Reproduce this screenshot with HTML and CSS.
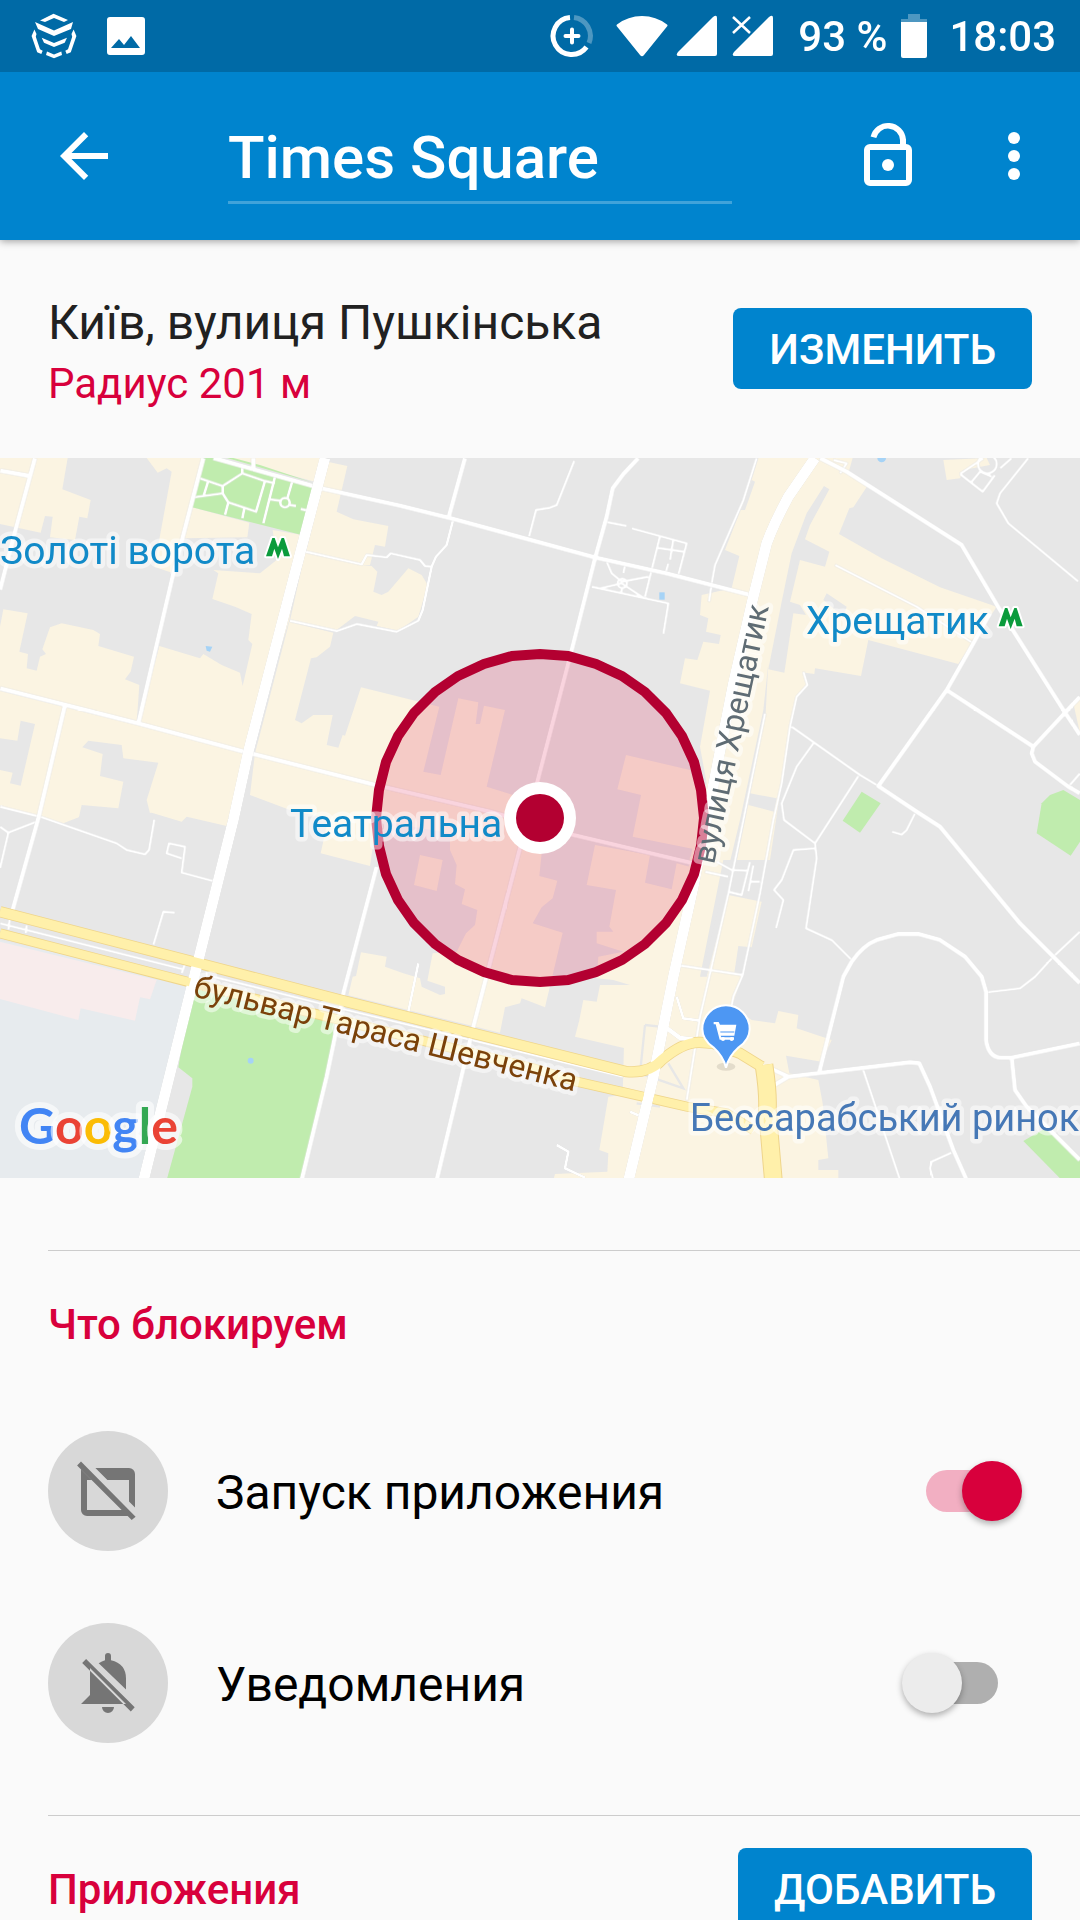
FILE: index.html
```html
<!DOCTYPE html>
<html lang="ru">
<head>
  <meta charset="UTF-8" />
  <meta name="viewport" content="width=device-width, initial-scale=1.0"/>
  <title>Times Square</title>
  <link rel="stylesheet" href="styles.css">
</head>
<body>
<div class="screen">

  <div class="status-bar">
    <svg class="status-app" viewBox="30 12 48 48" aria-hidden="true">
      <path d="M40 20.5 53.5 13.7 68 20 64 22 54 18 45 22z M35 22 54 30.5 73 22 71 29 54 36 38 29z M41.7 37.7 54 43 67 37.7 64.7 42.7 54 47 44 42.7z M47 51.5 54 54.5 61.3 51.5 62 55 54 58.3 46 55z M34.4 29.5 31.6 36 37.2 52.3 41.3 54 42.7 50.7 40 49.3 35.8 36.7 36.5 34z M73.6 29.5 76.4 36 70.8 52.3 66.7 54 65.3 50.7 68 49.3 72.2 36.7 71.5 34z"/>
    </svg>
    <svg class="status-image" viewBox="0 0 40 40" aria-hidden="true">
      <path fill-rule="evenodd" d="M4 1h32a3 3 0 0 1 3 3v32a3 3 0 0 1-3 3H4a3 3 0 0 1-3-3V4a3 3 0 0 1 3-3z M5 32h29L25 20l-7 9-5-6z"/>
    </svg>
    <div class="status-right">
      <svg class="status-data" viewBox="0 0 44 44" aria-hidden="true">
        <path fill="none" stroke="#fff" stroke-width="5" d="M20 3.600A18.500 18.500 0 1 0 36.500 33"/>
        <path fill="none" stroke="#fff" stroke-width="5" opacity=".3" d="M24 3.600A18.500 18.500 0 0 1 39 29"/>
        <path fill="none" stroke="#fff" stroke-width="4" stroke-linecap="round" d="M22 15.500v13M15.500 22h13"/>
      </svg>
      <svg class="status-wifi" viewBox="0 0 52 42" aria-hidden="true">
        <path d="M1 9.500Q12 1 26 1t25 8.500q1 1 0 2L28 40q-2 2.500-4 0L1 11.500q-1-1 0-2z"/>
      </svg>
      <svg class="status-signal" viewBox="0 0 42 42" aria-hidden="true">
        <path d="M37 2q4-3 4 1v36q0 2-2 2H3q-4 0-1-4z"/>
      </svg>
      <svg class="status-signal second" viewBox="0 0 42 42" aria-hidden="true">
        <path d="M37 2q4-3 4 1v36q0 2-2 2H3q-4 0-1-4z"/>
        <path stroke="#006aa6" stroke-width="6" d="M2 2l16 16M18 2 2 18"/>
        <path stroke="#fff" stroke-width="2.500" d="M1 2l17 16M18 2 1 18"/>
      </svg>
      <span class="battery-text">93 %</span>
      <svg class="status-battery" viewBox="0 0 26 44" aria-hidden="true">
        <path opacity=".3" d="M7 0h12v5h7v3H0V5h7z"/>
        <path d="M0 8h26v34q0 2-2 2H2q-2 0-2-2z"/>
      </svg>
      <span class="clock">18:03</span>
    </div>
  </div>

  <header class="toolbar">
    <button class="icon-button" type="button" aria-label="Назад">
      <svg viewBox="0 0 24 24"><path d="M20 11H7.830l5.590-5.590L12 4l-8 8 8 8 1.410-1.410L7.830 13H20v-2z"/></svg>
    </button>
    <input class="title-input" type="text" value="Times Square" aria-label="Название">
    <button class="icon-button" type="button" aria-label="Блокировка">
      <svg viewBox="0 0 24 24"><path fill-rule="evenodd" d="M18 8V6.500A6 6 0 0 0 6.200 5.500L8.100 6A4 4 0 0 1 16 6.700V8H6a2 2 0 0 0-2 2v10a2 2 0 0 0 2 2h12a2 2 0 0 0 2-2V10a2 2 0 0 0-2-2zM18 20H6V10h12z"/><circle cx="12" cy="15" r="2"/></svg>
    </button>
    <button class="icon-button more" type="button" aria-label="Ещё">
      <svg viewBox="0 0 24 24"><circle cx="12" cy="6" r="2"/><circle cx="12" cy="12" r="2"/><circle cx="12" cy="18" r="2"/></svg>
    </button>
  </header>

  <main class="content">
    <section class="place">
      <div class="place-info">
        <div class="address">Київ, вулиця Пушкінська</div>
        <div class="radius">Радиус 201 м</div>
      </div>
      <button class="button" type="button">ИЗМЕНИТЬ</button>
    </section>

    <svg class="map" viewBox="0 0 1080 720" role="img" aria-label="Карта">
      <rect width="1080" height="720" fill="#e7e7e7"/>

      <!-- map geometry is drawn at three units per pixel, in tiles -->
      <g transform="scale(.333333)">

        <!-- blocks -->
        <g transform="translate(0 -24)">
          <g class="built">
            <polygon points="0,24 203,24 187,118 272,150 262,205 238,200 225,270 150,262 158,200 135,198 122,248 0,222"/>
            <polygon points="440,24 610,24 520,370 463,350 515,65 500,55 473,68"/>
            <polygon points="680,24 965,24 945,95"/>
            <polygon points="577,172 748,218 742,262 550,265"/>
            <polygon points="640,360 780,370 830,330 818,240 905,255 868,510 745,905 415,820 478,588 600,625 610,612 665,645 720,668 728,708 757,582 745,570 755,492 705,470 637,447 655,370"/>
            <polygon points="10,478 83,490 58,605 84,612 80,655 110,662 120,620 138,612 127,598 150,532 185,520 280,540 300,552 295,588 402,620 392,665 375,688 418,705 410,820 0,715 0,530"/>
            <polygon points="0,722 735,905 680,1128 560,1100 545,1115 455,1088 240,1100 190,1120 0,1072"/>
            <polygon points="975,34 1042,48 1010,185 1060,208 1165,228 1155,290 1125,285 1110,345 1085,345 918,305 965,115"/>
            <polygon points="915,308 1085,345 1115,348 1132,365 1120,425 1145,435 1165,425 1225,355 1265,375 1283,405 1255,500 1195,542 1130,528 1135,515 1065,498 1010,540 870,512"/>
            <polygon points="868,515 1000,548 990,590 950,622 933,625 885,810 905,820 940,795 998,795 980,885 1015,893 1028,855 1035,857 1083,712 1318,770 1270,965 1322,975 1375,745 1435,757 1427,822 1440,822 1452,767 1515,780 1460,1010 1570,1045 1540,1160 1350,1150 1130,1110 1110,1248 962,1210 985,1105 870,1080 750,1035 765,910"/>
          </g>
          <g class="ground">
            <polygon points="62,812 105,822 62,1007 30,1000 38,968 0,960 0,865 52,872"/>
            <polygon points="265,872 365,885 370,925 475,938 440,1050 455,1110 235,1110 245,1065 355,1075 370,995 300,978 308,912 247,892"/>
          </g>
          <polygon class="park" points="612,24 660,24 940,105 905,255 577,172"/>
          <polygon class="park" points="680,24 765,48 940,98 780,45 700,24"/>
          <polygon class="water" points="617,588 637,590 630,605 620,602"/>
        </g>

        <g transform="translate(1020 -24)">
          <g class="built">
            <polygon points="858,915 1050,960 1100,1110 1075,1200 878,1160 903,1035 832,1018"/>
          </g>
          <rect class="water" x="958" y="427" width="16" height="22"/>
        </g>

        <g transform="translate(2100 -24)">
          <g class="built">
            <polygon points="175,24 458,24 445,70 502,108 460,172 448,175 417,252 545,325 720,412 890,470 775,642 505,570 483,678 345,655 343,672 315,668 320,705 290,740 270,830 210,1230 -30,1230 20,1000 0,890 30,722 -60,700 -45,625 -8,630 10,575 57,582 62,555 18,545 25,505 0,495 5,435 95,415 118,318 75,300 145,120"/>
            <polygon points="730,30 860,24 870,45 790,60 780,85 740,90"/>
            <polygon points="1120,760 1140,740 1140,850"/>
          </g>
          <g class="ground">
            <polygon points="372,108 388,118 330,225 315,268 388,305 375,350 300,330 270,455 300,465 318,495 280,490 253,668 205,658 245,455 275,310 320,190"/>
            <polygon points="205,640 190,780 120,1110 60,1360 0,1600 20,1600 90,1330 135,1110 197,790"/>
            <polygon points="150,1030 230,1045 222,1085 145,1065"/>
            <polygon points="155,90 165,95 135,180 122,180"/>
            <polygon points="380,430 440,470 430,500 370,450"/>
          </g>
          <ellipse class="water" cx="545" cy="24" rx="13" ry="13"/>
        </g>

        <g transform="translate(0 1056)">
          <polygon class="campus" points="0,390 570,520 430,1110 0,1110"/>
          <polygon class="clinic" points="0,395 470,510 450,568 420,562 405,632 242,595 235,630 0,567"/>
          <polygon class="park" points="575,530 1005,630 990,760 900,1110 500,1110 577,830 577,805 535,772"/>
          <circle class="water" cx="752" cy="752" r="9"/>
        </g>

        <g transform="translate(1020 1056)">
          <g class="built">
            <polygon points="330,30 560,80 605,130 598,198 652,212 638,265 605,292 578,340 668,368 615,592 545,565 540,580 495,592 480,668 25,556 38,500 48,498 63,427 140,440 135,470 190,490 240,505 245,530 300,555 315,552 315,530 262,512 278,430 350,425 378,370 405,345 412,300 365,282 375,238 345,222 350,165 330,120"/>
            <polygon points="240,135 308,150 290,243 222,225"/>
            <polygon points="765,105 930,135 915,218 995,238 1010,160 1085,180 1060,400 1000,700 855,715 705,680 718,630 730,570 770,575 780,525 870,525 820,510 770,505 775,440 850,425 770,400 770,365 820,365 808,350 828,240 740,225"/>
          </g>
        </g>

        <g transform="translate(2100 1056)">
          <g class="built">
            <polygon points="-30,140 70,150 0,500 20,500 85,255 185,275 155,412 115,408 103,488 128,495 95,590 155,630 225,640 235,603 295,615 290,655 395,690 365,755 258,737 268,790 355,810 368,880 385,1045 355,1050 355,1080 415,1080 415,1110 -440,1110 -435,1092 -278,1085 -275,1030 -302,1020 -275,860 -232,855 -228,705 -100,690"/>
          </g>
          <polygon class="park" points="485,-55 542,-20 480,68 428,32"/>
          <polygon class="park" points="1090,-60 1140,-30 1140,95 1112,137 1010,70 1025,-20 1050,-45"/>
          <polygon class="park" points="1010,970 1045,950 1140,1050 1140,1110 1085,1110 970,993"/>
          <path fill="none" stroke="#e7e7e7" stroke-width="7" d="M-165,645 -180,790 -50,835 -95,760 M-165,645 -120,650 M-190,880 -120,890"/>
        </g>

        <!-- small paths -->
        <g class="road path">
          <g transform="translate(0 -24)">
            <path d="M918,305 1085,343 1100,315 1160,322 1172,310 1260,330 1275,348 1295,350 M870,512 1010,543 1070,522 1190,545 1255,512 1268,480 1295,350 1308,320 1340,285 1360,207"/>
            <path d="M600,85 668,108 727,70 795,93 768,185 685,157 668,130 580,142 M668,108V130 M625,92 610,140 M685,157 675,195 M733,175 727,205 M727,50V70 M795,93 825,100 M825,80 790,220 M878,90 862,145 M810,148 840,152 M870,165 888,168 M902,177 925,182"/>
            <circle cx="855" cy="158" r="14"/>
          </g>
          <g transform="translate(1020 -24)">
            <path d="M703,32 650,165 630,173 588,180 567,260 M795,215 860,228 M875,235 1040,280 1015,375 M960,258 915,440 M950,293 1032,305 M1000,268 990,330 M985,340 975,375 M755,410 985,460 970,552 M800,335 815,370 845,395 925,380 M845,400 910,443 M845,400 780,415 M855,345 850,370 M847,415 842,430"/>
            <circle cx="847" cy="400" r="14"/>
          </g>
          <g transform="translate(2100 -24)">
            <path d="M170,24 130,150 45,345 35,400 27,455 M405,345 650,470 820,580 M275,830 480,975 535,1008 M340,880 290,950 245,1060 252,1110 345,1180 M475,978 345,1180 350,1225 318,1435 395,1470 455,1530 M345,1195 280,1200 245,1290 222,1320 250,1350 228,1435"/>
            <path d="M310,665 322,705 290,740 270,830 245,1000 220,1110 180,1330 128,1575 100,1640 88,1700 M195,790 130,1110 85,1330 0,1700 -40,1950 M-70,1545 128,1575"/>
            <path d="M985,24 900,130 890,160 925,220 1135,395 M780,72 850,25 M780,72 848,125 885,75 M935,24 900,55 M815,95 840,65 875,80 M400,30 440,40 420,70"/>
            <circle cx="862" cy="42" r="28"/>
            <path d="M1105,1010 1140,970"/>
          </g>
          <g transform="translate(0 1056)">
            <path d="M0,-10 120,20 350,100 380,120 435,133 447,120 463,28 M110,35 25,68 0,50 M25,68 0,175 M545,145 500,130 507,100 555,110 545,188 640,213 M525,308 490,305 460,405"/>
            <path d="M0,340 550,478 M30,320 25,360 M80,345 77,370 M555,462 545,490 M620,485 620,500 M640,500 1020,595 1870,800"/>
          </g>
          <g transform="translate(1020 1056)">
            <path d="M235,460 205,605 M650,1005 685,1025 675,1075 735,1103 M1010,560 1030,625 1080,632 M870,905 900,918"/>
          </g>
          <g transform="translate(2100 1056)">
            <path d="M50,155 95,180 145,182 M150,155 125,255 85,245 M160,165 145,245 M150,215H180 M15,185 85,200 M860,547 960,535 1005,500 1060,440 1140,365 M488,775 600,1110 M755,1028 695,1055 690,1075 700,1110 M645,10 620,60 605,74 575,65"/>
          </g>
        </g>

        <!-- streets -->
        <g class="road street">
          <g transform="translate(0 -24)">
            <path d="M105,24 45,245 0,420 M0,62 90,78 M610,24 520,370 415,820 M195,765 115,1105 35,1390 M0,715 415,820 740,907 1120,1003 1470,1085 1720,1155 2100,1245 M640,24 965,115 1200,167 1360,207 1785,322 2000,370 2250,435 M1395,24 1345,205 M760,24V60 M1130,1250 1030,1630 1005,1760 980,1880 905,2190"/>
          </g>
          <g transform="translate(1020 -24)">
            <path d="M895,24 850,72 818,115 800,200 765,325 690,620 400,1730 290,2190"/>
          </g>
          <g transform="translate(2100 -24)">
            <path d="M360,24 440,65 785,285 900,480 1090,780 1140,855 M1140,740 1000,890 995,910 1005,935 1105,1010 1140,1030 M1000,890 740,720 M820,580 740,720 535,1008 650,1085 720,1130 960,1420 1140,1600 M870,490 820,580"/>
          </g>
          <g transform="translate(2100 1056)">
            <path d="M358,785 430,500 455,455Q490,405 530,390L595,372H655L720,390 795,440 845,500 858,545V690Q865,740 900,743L935,743 1140,700 M935,743 945,840 980,890 1140,1050 M200,770 265,800 630,757 658,760 690,830 760,1020 800,1110 M215,830 265,800"/>
          </g>
        </g>

        <!-- boulevard -->
        <g transform="translate(0 1056)" fill="none">
          <g stroke="#efd58b">
            <path stroke-width="34" d="M0,305 590,458 1020,570 1880,785Q1950,790 1985,750Q2050,695 2100,697L2140,700 2220,730 2285,770"/>
            <path stroke-width="30" d="M0,370 560,515 1600,775 1730,815 2060,890 2180,910 2260,960"/>
            <path stroke-width="56" d="M2292,765Q2305,850 2302,900L2320,1110"/>
          </g>
        </g>
        <g class="road avenue">
          <path d="M975,0 745,881 700,1086 590,1526 430,2170"/>
          <path d="M2445,0 2365,116Q2320,200 2300,256L2260,416 2200,676 2080,1286 2020,1556 1960,1856 1885,2170"/>
          <path class="turn" d="M2000,1710 2040,1740 2080,1745"/>
        </g>
        <g transform="translate(0 1056)" fill="none" stroke="#fff0aa">
          <path stroke-width="29" d="M0,305 590,458 1020,570 1880,785Q1950,790 1985,750Q2050,695 2100,697L2140,700 2220,730 2285,770"/>
          <path stroke-width="25" d="M0,370 570,517 M640,535 1600,775 1730,815 1930,860 M1960,867 2060,890 2180,910 2260,960"/>
          <path stroke-width="50" d="M2292,765Q2305,850 2302,900L2320,1110"/>
        </g>

        <!-- market pin -->
        <ellipse cx="2178" cy="1826" rx="28" ry="12" fill="#e3dccb"/>
        <path fill="#4d97f3" stroke="#fff" stroke-width="6" d="M2178,1829Q2170,1795 2140,1768Q2107,1745 2107,1713A71,71 0 0 1 2249,1713Q2249,1745 2216,1768Q2186,1795 2178,1829z"/>
        <path fill="#fff" d="M2141,1692h15l4,8h49l-6,33h-41l2,5h38v7h-43l-12,-46h-6z"/>
        <circle cx="2169" cy="1743" r="6" fill="#fff"/><circle cx="2195" cy="1743" r="6" fill="#fff"/>
        <path stroke="#4d97f3" stroke-width="3" d="M2161,1722h42"/>

        <!-- metro signs -->
        <g class="metro">
          <path d="M798,295 817,240 824,240 834,268 845,240 852,240 870,295 852,295 846,272 834,303 823,272 816,295z"/>
          <path d="M2996,505 3015,450 3022,450 3032,478 3043,450 3050,450 3068,505 3050,505 3044,482 3032,513 3021,482 3014,505z"/>
        </g>
      </g>

      <!-- geofence -->
      <polygon class="fence" points="704,360 701,388 694,416 682,442 666,465 645,486 622,502 596,514 568,522 540,524 512,522 484,514 458,502 435,486 414,465 398,442 386,416 379,388 376,360 379,332 386,304 398,278 414,255 435,234 458,218 484,206 512,198 540,196 568,198 596,206 622,218 645,234 666,255 682,278 694,304 701,332"/>

      <g class="labels">
        <text class="station" x="0" y="106">Золоті ворота</text>
        <text class="station" x="806" y="176">Хрещатик</text>
        <text class="station" x="290" y="379">Театральна</text>
        <text class="market" x="690" y="673">Бессарабський ринок</text>
        <text class="street-name" transform="translate(714 407) rotate(-78)">вулиця Хрещатик</text>
        <text class="boulevard-name" transform="translate(192 538) rotate(14)">бульвар Тараса Шевченка</text>
      </g>

      <circle cx="540" cy="360" r="36" fill="#fff"/>
      <circle cx="540" cy="360" r="24" fill="#b30031"/>

      <text class="logo" x="19" y="686"><tspan fill="#4285f4">G</tspan><tspan fill="#ea4335">o</tspan><tspan fill="#fbbc05">o</tspan><tspan fill="#4285f4">g</tspan><tspan fill="#34a853">l</tspan><tspan fill="#ea4335">e</tspan></text>
    </svg>

    <section class="group first">
      <h2 class="group-title">Что блокируем</h2>
      <label class="row">
        <span class="row-icon">
          <svg viewBox="0 0 24 24"><path d="M7.800 4.300H19a2 2 0 0 1 2 2V17.500L19 15.500V8.300H11.800z M3 4.800 6.500 8.300H5V18.300H17.500L19.500 20.300H5a2 2 0 0 1-2-2z M3 2.200 21.200 20.600 19.900 21.700 1.700 3.500z"/></svg>
        </span>
        <span class="row-text">Запуск приложения</span>
        <input class="switch" type="checkbox" checked>
      </label>
      <label class="row">
        <span class="row-icon">
          <svg viewBox="0 0 24 24"><path d="M8.900 5.400Q10 4.700 11 4.400V3a1 1 0 0 1 2 0V4.400Q18 5.600 18 10.500V14.200z M6 7V16L3 19H18L6 7z M4.700 4 20.900 20.100 19.600 21.500 3.400 5.300z M10 20h4a2 2 0 0 1-4 0z"/></svg>
        </span>
        <span class="row-text">Уведомления</span>
        <input class="switch" type="checkbox">
      </label>
    </section>

    <section class="group">
      <div class="group-head">
        <h2 class="group-title">Приложения</h2>
        <button class="button" type="button">ДОБАВИТЬ</button>
      </div>
    </section>
  </main>

</div>
</body>
</html>
```
FILE: styles.css
```css
* { box-sizing: border-box; }

body {
  margin: 0;
  font-family: Roboto, "Noto Sans", sans-serif;
  background-color: #fafafa;
  color: #000;
}
svg { display: block; flex: none; }

.screen {
  height: 100vh;
  display: flex;
  flex-direction: column;
  overflow: hidden;
}

/* status bar */
.status-bar {
  flex: none;
  height: 72px;
  padding: 0 24px 0 30px;
  display: flex;
  align-items: center;
  background: #006aa6;
  color: #fff;
  font-size: 42px;
  font-weight: 500;
  z-index: 2;
}
.status-bar svg { fill: #fff; }
.status-app { width: 48px; height: 48px; }
.status-image { width: 40px; height: 40px; margin-left: 28px; }
.status-right {
  margin-left: auto;
  display: flex;
  align-items: center;
}
.status-data { width: 44px; height: 44px; margin-right: 22px; }
.status-wifi { width: 52px; height: 42px; margin-right: 8px; }
.status-signal { width: 42px; height: 42px; }
.status-signal.second { margin-left: 14px; }
.battery-text { margin-left: 24px; }
.status-battery { width: 26px; height: 44px; margin: 0 22px 0 14px; }

/* toolbar */
.toolbar {
  flex: none;
  height: 168px;
  padding: 0 30px 0 48px;
  display: flex;
  align-items: center;
  background: #0084ce;
  box-shadow: 0 1px 8px rgba(0, 0, 0, 0.4);
  z-index: 1;
}
.icon-button {
  flex: none;
  width: 72px;
  height: 72px;
  padding: 0;
  border: none;
  background: none;
  cursor: pointer;
}
.icon-button svg { width: 72px; height: 72px; fill: #fff; }
.icon-button.more { margin-left: 54px; }
.title-input {
  flex: 1;
  min-width: 0;
  height: 84px;
  margin: 12px 120px 0 108px;
  padding: 0 0 6px;
  border: none;
  border-bottom: 3px solid #40a3da;
  border-radius: 0;
  outline: none;
  background: none;
  color: #fff;
  font-family: inherit;
  font-size: 60px;
  font-weight: 500;
}

/* content */
.content {
  flex: 1;
  min-height: 0;
  overflow-y: auto;
  scrollbar-width: none;
}
.place {
  height: 218px;
  padding: 0 48px 2px;
  display: flex;
  align-items: center;
  justify-content: space-between;
}
.place-info { padding-top: 8px; }
.address {
  font-size: 48px;
  line-height: 56px;
  color: #212121;
}
.radius {
  margin-top: 8px;
  font-size: 42px;
  line-height: 50px;
  color: #d8003c;
}
.button {
  height: 81px;
  padding: 3px 36px 0;
  border: none;
  border-radius: 8px;
  background: #0084ce;
  color: #fff;
  font-family: inherit;
  font-size: 42px;
  font-weight: 500;
  cursor: pointer;
}

/* map */
.map { width: 100%; height: auto; }
.built { fill: #fbf4e2; }
.ground { fill: #e7e7e7; }
.park { fill: #c0ecae; }
.campus { fill: #e7ebee; }
.clinic { fill: #f8ecec; }
.water { fill: #a6d3f6; }
.road {
  fill: none;
  stroke: #fff;
  stroke-linejoin: round;
  filter: drop-shadow(0 0 2px rgba(0, 0, 0, 0.15));
}
.path { stroke-width: 8px; }
.street { stroke-width: 14px; }
.avenue { stroke-width: 32px; }
.turn { stroke-width: 14px; }
.metro path {
  fill: #0b9b3c;
  stroke: #fff;
  stroke-width: 12px;
  stroke-linejoin: round;
  paint-order: stroke;
}
.fence {
  fill: rgba(220, 0, 60, 0.17);
  stroke: #b30031;
  stroke-width: 10px;
}
.labels text {
  stroke: rgba(255, 255, 255, 0.5);
  stroke-width: 9px;
  stroke-linejoin: round;
  paint-order: stroke;
}
.station { font-size: 39px; fill: #118ac8; }
.market { font-size: 38px; fill: #4678b6; }
.street-name { font-size: 32px; fill: #5f6c74; }
.boulevard-name { font-size: 32px; fill: #7a410a; }
.logo {
  font-family: Lato, sans-serif;
  font-size: 50px;
  font-weight: 700;
  stroke: rgba(255, 255, 255, 0.6);
  stroke-width: 12px;
  stroke-linejoin: round;
  paint-order: stroke;
}

/* settings */
.group {
  margin-top: 36px;
}
.group::before {
  content: "";
  display: block;
  height: 1px;
  margin-left: 48px;
  background: #ccc;
}
.group.first { margin-top: 72px; }
.group-title {
  height: 144px;
  margin: 0;
  padding: 0 48px;
  font-size: 42px;
  font-weight: 500;
  line-height: 148px;
  color: #d8003c;
}
.group-head {
  display: flex;
  align-items: center;
  justify-content: space-between;
  padding-right: 48px;
}
.row {
  height: 192px;
  padding: 0 58px 0 48px;
  display: flex;
  align-items: center;
  cursor: pointer;
}
.row-icon {
  flex: none;
  width: 120px;
  height: 120px;
  border-radius: 50%;
  background: #d8d8d8;
  display: flex;
  align-items: center;
  justify-content: center;
}
.row-icon svg { width: 72px; height: 72px; fill: #757575; }
.row-text {
  flex: 1;
  margin-left: 48px;
  padding-top: 2px;
  font-size: 48px;
}
.switch {
  appearance: none;
  flex: none;
  width: 120px;
  height: 60px;
  margin: 0;
  display: flex;
  align-items: center;
  cursor: pointer;
}
.switch::before {
  content: "";
  width: 72px;
  height: 42px;
  margin-left: 24px;
  border-radius: 21px;
  background: #afafaf;
}
.switch::after {
  content: "";
  width: 60px;
  height: 60px;
  margin-left: -96px;
  border-radius: 50%;
  background: #ececec;
  box-shadow: 0 3px 6px rgba(0, 0, 0, 0.3);
}
.switch:checked::before { background: #f2afc2; }
.switch:checked::after {
  margin-left: -36px;
  background: #d8003c;
}
```
